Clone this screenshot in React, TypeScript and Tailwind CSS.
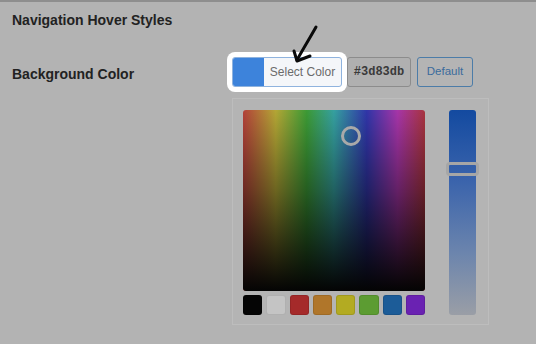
const swatches = [
  "#050505",
  "#c4c4c4",
  "#a52a2a",
  "#b0762a",
  "#b3ab22",
  "#5c9c32",
  "#1c5c98",
  "#6a22b2",
];

const Arrow = () => (
  <svg
    className="pointer-events-none absolute left-[290px] top-[22px]"
    width="32"
    height="42"
    viewBox="0 0 32 42"
    fill="none"
    stroke="#0a0a0a"
    strokeWidth="3"
    strokeLinecap="round"
    strokeLinejoin="round"
  >
    <path d="M26 3 C21 12 13 25 7 36" />
    <path d="M4 27 L7 37 L20 32" />
  </svg>
);

const ColorPicker = () => (
  <div className="ml-[220px] mt-[6px] flex w-[257px] gap-[24px] border border-[#bdbdbd] bg-[#b4b4b4] pb-[9px] pl-[10px] pr-[12px] pt-[11px]">
    <div className="flex w-[182px] flex-col gap-[4px]">
      <div className="relative h-[181px] w-[182px] overflow-hidden rounded-[3px] bg-[linear-gradient(to_right,#b3413a_0%,#b3a635_18%,#3c9a35_35%,#35a0a0_50%,#3035a8_68%,#a635a8_85%,#a8343e_100%)]">
        <div className="absolute inset-0 bg-[linear-gradient(to_bottom,rgba(0,0,0,0)_0%,rgba(0,0,0,0.4)_45%,#040404_100%)]" />
        <div className="absolute left-[98px] top-[16px] h-[20px] w-[20px] rounded-full border-[3px] border-[#a9a9a9]" />
      </div>
      <div className="grid grid-cols-8 gap-[4px]">
        {swatches.map((c) => (
          <div
            key={c}
            className="h-[20px] rounded-[3px] border border-black/10"
            style={{ backgroundColor: c }}
          />
        ))}
      </div>
    </div>
    <div className="relative w-[28px] rounded-[3px] bg-[linear-gradient(to_bottom,#134aa0_0%,#3b64ac_35%,#6c85ad_70%,#9a9ea6_100%)]">
      <div className="absolute -left-[3px] -right-[3px] top-[52px] h-[14px] rounded-[4px] border-[3px] border-[#a6a6a6]" />
    </div>
  </div>
);

export default function App() {
  return (
    <div className="relative h-[344px] w-[536px] overflow-hidden border-t-2 border-[#8e8e8e] bg-[#b3b3b3] pl-[12px] font-['Liberation_Sans',Arial,sans-serif] text-[#222]">
      <h2 className="mt-[8px] text-[14px] font-bold leading-[20px]">
        Navigation Hover Styles
      </h2>
      <div className="mt-[22px] flex items-center">
        <div className="w-[215px] pt-[3px] text-[14px] font-bold leading-[20px]">
          Background Color
        </div>
        <div className="rounded-[8px] bg-white p-[5px]">
          <button className="flex h-[30px] w-[110px] overflow-hidden rounded-[3px] border border-[#8fb3de] bg-[#f4f6f9]">
            <span className="h-full w-[31px] bg-[#3d83db]" />
            <span className="flex h-full flex-1 items-center justify-center text-[12px] text-[#6b6b6b]">
              Select Color
            </span>
          </button>
        </div>
        <div className="flex h-[30px] w-[64px] items-center justify-center rounded-[3px] border border-[#8c8c8c] bg-[#b0b0b0] font-['Liberation_Mono',monospace] text-[12px] font-bold text-[#3a3a3a]">
          #3d83db
        </div>
        <button className="ml-[6px] flex h-[30px] w-[56px] items-center justify-center rounded-[3px] border border-[#4c7ca8] bg-[#b4b4b4] text-[11.5px] text-[#3a6b9c]">
          Default
        </button>
      </div>
      <ColorPicker />
      <Arrow />
    </div>
  );
}
